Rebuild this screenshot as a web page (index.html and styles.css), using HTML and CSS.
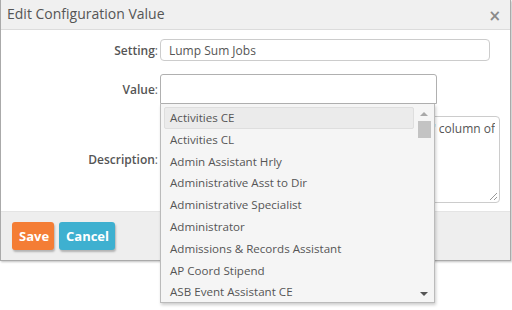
FILE: index.html
```html
<!DOCTYPE html>
<html>
<head>
<meta charset="utf-8">
<link rel="stylesheet" href="styles.css">
</head>
<body>
<div class="dialog">
  <div class="header">
    <span class="title">Edit Configuration Value</span>
    <span class="close">×</span>
  </div>
  <div class="body">
    <div class="row row-setting">
      <label class="label"><b>Setting</b>:</label>
      <div class="input input-setting">Lump Sum Jobs</div>
    </div>
    <div class="row row-value">
      <label class="label"><b>Value</b>:</label>
      <div class="value-wrap">
        <div class="input input-value"></div>
        <div class="dropdown">
          <ul class="options">
            <li class="opt active">Activities CE</li>
            <li class="opt">Activities CL</li>
            <li class="opt">Admin Assistant Hrly</li>
            <li class="opt">Administrative Asst to Dir</li>
            <li class="opt">Administrative Specialist</li>
            <li class="opt">Administrator</li>
            <li class="opt">Admissions &amp; Records Assistant</li>
            <li class="opt">AP Coord Stipend</li>
            <li class="opt">ASB Event Assistant CE</li>
          </ul>
          <div class="scrollbar">
            <span class="arrow up"></span>
            <span class="thumb"></span>
            <span class="spacer"></span>
            <span class="arrow down"></span>
          </div>
        </div>
      </div>
    </div>
    <div class="row row-desc">
      <label class="label"><b>Description</b>:</label>
      <div class="textarea">
        <div class="ta-line"><span>Jobs listed here will show in the "Job" column of</span></div>
        <span class="grip"></span>
      </div>
    </div>
  </div>
  <div class="footer">
    <button class="btn btn-save">Save</button>
    <button class="btn btn-cancel">Cancel</button>
  </div>
</div>
</body>
</html>
```
FILE: styles.css
```css
html, body {
  margin: 0;
  padding: 0;
  background: #ffffff;
}
body {
  font-family: "Open Sans", "Liberation Sans", sans-serif;
  color: #555;
  font-size: 12px;
  min-height: 310px;
}
.dialog {
  width: 509px;
  height: 260px;
  border: 1px solid #aaa;
  border-top: none;
  display: flex;
  flex-direction: column;
  box-shadow: 1px 1px 2px rgba(0,0,0,0.25);
  background: #fff;
}
.header {
  height: 29px;
  background: #f0f0f0;
  border-bottom: 1px solid #dcdcdc;
  display: flex;
  align-items: center;
  justify-content: space-between;
  padding: 0 9px 0 6px;
}
.title {
  font-size: 14px;
  color: #555;
  line-height: 1;
  margin-top: -2px;
}
.close {
  font-family: "DejaVu Sans", sans-serif;
  font-size: 15px;
  font-weight: bold;
  color: #8a8a8a;
  line-height: 1;
  margin-top: 3px;
}
.body {
  flex: 1;
  padding-top: 9px;
  display: flex;
  flex-direction: column;
}
.row {
  display: flex;
  align-items: center;
}
.label {
  text-align: right;
  color: #666;
  font-size: 12px;
  padding-right: 2px;
  box-sizing: border-box;
  width: 159px;
}
.label b {
  font-weight: 600;
  color: #555;
}
.input {
  box-sizing: border-box;
  border: 1px solid #ccc;
  border-radius: 4px;
  background: #fff;
  padding: 0 8px;
  display: flex;
  align-items: center;
  color: #555;
}
.input-setting {
  width: 330px;
  height: 22px;
}
.row-value {
  margin-top: 13px;
}
.value-wrap {
  position: relative;
  width: 277px;
}
.input-value {
  width: 277px;
  height: 30px;
  border-color: #b0b0b0;
  border-radius: 3px 3px 0 0;
}
.dropdown {
  position: absolute;
  left: 0;
  top: 30px;
  width: 275px;
  height: 199px;
  box-sizing: border-box;
  background: #f5f5f5;
  border: 1px solid #bbb;
  border-top: none;
  box-shadow: 1px 2px 3px rgba(0,0,0,0.2);
  z-index: 5;
  display: flex;
  padding: 3px 3px 0 3px;
  font-size: 11.6px;
}
.options {
  list-style: none;
  margin: 0;
  padding: 0;
  flex: 1;
}
.opt {
  height: 21.8px;
  line-height: 20px;
  padding-left: 5px;
  box-sizing: border-box;
  color: #555;
  white-space: nowrap;
  border: 1px solid transparent;
  border-radius: 2px;
  margin-right: 3px;
}
.opt.active {
  background: #ebebeb;
  border-color: #dedede;
}
.scrollbar {
  width: 14px;
  display: flex;
  flex-direction: column;
  align-items: center;
  padding-top: 2px;
}
.arrow {
  width: 0;
  height: 0;
  border-left: 4px solid transparent;
  border-right: 4px solid transparent;
}
.arrow.up {
  border-bottom: 4px solid #a8a8a8;
  margin-top: 3px;
}
.arrow.down {
  border-top: 4px solid #555;
  margin-bottom: 6px;
}
.thumb {
  width: 13px;
  height: 17px;
  background: #c3c3c3;
  margin-top: 5px;
}
.spacer {
  flex: 1;
}
.row-desc {
  margin-top: 12px;
}
.textarea {
  position: relative;
  box-sizing: border-box;
  width: 340px;
  height: 87px;
  border: 1px solid #ccc;
  border-radius: 4px;
  padding: 3px 4px 0 8px;
  line-height: 18px;
  color: #555;
}
.ta-line {
  display: flex;
  justify-content: flex-end;
  overflow: hidden;
  white-space: nowrap;
}
.ta-line span {
  flex-shrink: 0;
}
.grip {
  position: absolute;
  right: 2px;
  bottom: 2px;
  width: 7px;
  height: 7px;
  background: linear-gradient(135deg, transparent 45%, #999 45%, #999 55%, transparent 55%, transparent 75%, #999 75%, #999 85%, transparent 85%);
}
.footer {
  height: 49px;
  background: #eeeeee;
  border-top: 1px solid #e4e4e4;
  display: flex;
  align-items: center;
  padding-left: 11px;
  gap: 5px;
  box-sizing: border-box;
}
.btn {
  font-family: "Open Sans", "Liberation Sans", sans-serif;
  font-weight: bold;
  font-size: 13px;
  color: #fff;
  border: none;
  border-radius: 3px;
  height: 28px;
  padding: 0 7px;
  box-shadow: 1px 2px 2px rgba(0,0,0,0.25);
}
.btn-save {
  background: #f47d35;
  width: 42px;
}
.btn-cancel {
  background: #3eb0d0;
  width: 56px;
}
```
